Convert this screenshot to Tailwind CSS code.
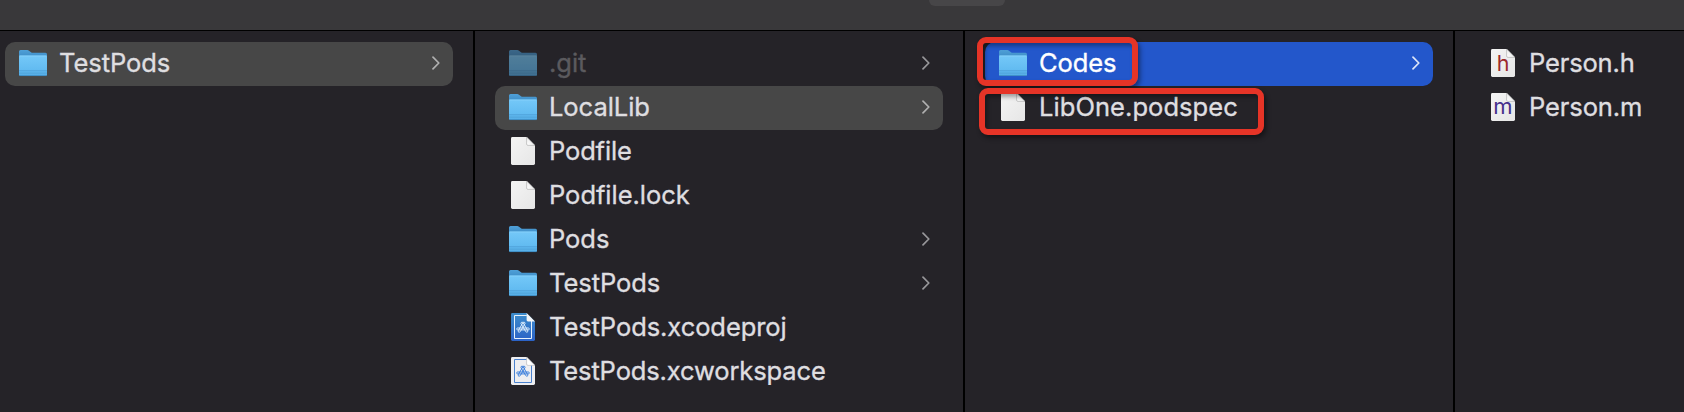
<!DOCTYPE html>
<html lang="en">
<head>
<meta charset="utf-8">
<title>Finder</title>
<script src="https://cdn.jsdelivr.net/npm/@tailwindcss/browser@4"></script>
</head>
<body class="relative flex h-[412px] w-[1684px] flex-col overflow-hidden bg-[#252328] font-['Inter','Liberation_Sans',sans-serif] text-[25.5px] text-[#dfdee0] [-webkit-text-stroke:0.35px_currentColor]">
<svg class="absolute size-0" aria-hidden="true">
  <defs>
    <linearGradient id="front" x1="0" y1="0" x2="0" y2="1"><stop offset="0" stop-color="#74c8f8"/><stop offset=".7" stop-color="#62bbf1"/><stop offset="1" stop-color="#55ade6"/></linearGradient>
    <linearGradient id="back" x1="0" y1="0" x2="0" y2="1"><stop offset="0" stop-color="#4fa0d8"/><stop offset="1" stop-color="#3a88c2"/></linearGradient>
    <linearGradient id="paper" x1="0" y1="0" x2="1" y2="1"><stop offset="0" stop-color="#f4f4f4"/><stop offset="1" stop-color="#e6e6e6"/></linearGradient>
    <linearGradient id="bluepaper" x1="0" y1="0" x2="0" y2="1"><stop offset="0" stop-color="#3d8dcc"/><stop offset="1" stop-color="#2b62c6"/></linearGradient>
    <linearGradient id="fold" x1="0" y1="1" x2="1" y2="0"><stop offset="0" stop-color="#ffffff"/><stop offset=".5" stop-color="#f0f0f0"/></linearGradient>
    <symbol id="folder" viewBox="0 0 28 28">
      <path d="M0 2.5Q0 1 1.5 1H8.2Q9.2 1 10 1.7L12 3.2Q12.7 3.8 13.7 3.8H26.5Q28 3.8 28 5.3V10H0Z" fill="url(#back)"/>
      <path d="M0 7.2Q0 6.6 .8 6.6H27.2Q28 6.6 28 7.2V25.5Q28 27 26.5 27H1.5Q0 27 0 25.5Z" fill="url(#front)"/>
      <path d="M.5 7H27.5" stroke="#8dd4fb" stroke-width=".7"/>
      <path d="M0 21.7H28M0 24.1H28" stroke="#4a9cd2" stroke-width=".7"/>
      <path d="M.5 26.6H27.5" stroke="#3a86bb" stroke-width=".8"/>
    </symbol>
    <symbol id="sheet" viewBox="0 0 24 28">
      <path d="M1.4 0H15.6L24 8.4V26.6Q24 28 22.6 28H1.4Q0 28 0 26.6V1.4Q0 0 1.4 0Z" fill="url(#paper)"/>
      <path d="M15.6 0L24 8.4H17Q15.6 8.4 15.6 7Z" fill="url(#fold)" stroke="#a8a8a8" stroke-width=".6"/>
    </symbol>
    <symbol id="appmark" viewBox="0 0 14 12">
      <g fill="none" stroke="currentColor" stroke-width="1" stroke-linejoin="round">
        <path d="M5.1 1.3Q6 .2 7 1.2L11.7 9.4Q12 10.7 11.1 11Q10.2 11 9.8 10.3L5.1 2.6Q4.7 1.9 5.1 1.3Z"/>
        <path d="M8.9 1.3Q8 .2 7 1.2L2.3 9.4Q2 10.7 2.9 11Q3.8 11 4.2 10.3L8.9 2.6Q9.3 1.9 8.9 1.3Z"/>
        <rect x=".7" y="6.7" width="12.6" height="1.9" rx=".9"/>
      </g>
    </symbol>
    <symbol id="project" viewBox="0 0 24 28">
      <path d="M1.4 0H15.6L24 8.4V26.6Q24 28 22.6 28H1.4Q0 28 0 26.6V1.4Q0 0 1.4 0Z" fill="url(#bluepaper)"/>
      <path d="M15.8 2.5H3.5V25.5H20.5V8" fill="none" stroke="#e6f1fb" stroke-width="1"/>
      <path d="M15.6 0L24 8.4H17Q15.6 8.4 15.6 7Z" fill="#f4f6f8"/>
      <use href="#appmark" x="5" y="8.3" width="14" height="12" color="#d9ebfb"/>
    </symbol>
    <symbol id="workspace" viewBox="0 0 24 28">
      <path d="M1.4 0H15.6L24 8.4V26.6Q24 28 22.6 28H1.4Q0 28 0 26.6V1.4Q0 0 1.4 0Z" fill="#eeeef1"/>
      <path d="M15.8 2.5H3.5V25.5H20.5V8" fill="none" stroke="#4a82cf" stroke-width="1"/>
      <path d="M15.6 0L24 8.4H17Q15.6 8.4 15.6 7Z" fill="#fff" stroke="#b0b0b4" stroke-width=".6"/>
      <use href="#appmark" x="5" y="8.3" width="14" height="12" color="#3f80dc"/>
    </symbol>
    <symbol id="chevron" viewBox="0 0 8 14"><path d="M1 1.2L6.8 7L1 12.8" fill="none" stroke="currentColor" stroke-width="1.7" stroke-linecap="round" stroke-linejoin="round"/></symbol>
  </defs>
</svg>

<header class="flex h-[31px] shrink-0 justify-center border-b border-black bg-[#39383a]">
  <div class="ml-[250px] h-[6px] w-[76px] rounded-b-[8px] bg-[#474648]"></div>
</header>

<main class="flex flex-1 leading-[42px]">
  <section class="w-[475px] shrink-0 border-r-2 border-black pt-[11px] pl-[5px]">
    <div class="flex h-11 w-[448px] items-center rounded-[10px] bg-[#474747] pr-[13px] pb-[2px] pl-[14px]">
      <svg class="size-7"><use href="#folder"/></svg>
      <span class="ml-3 flex-1 tracking-[-0.05px]">TestPods</span>
      <svg class="h-[14px] w-2 text-[#b0b0b0]"><use href="#chevron"/></svg>
    </div>
  </section>

  <section class="w-[490px] shrink-0 border-r-2 border-black pt-[11px] pl-5">
    <div class="flex h-11 w-[448px] items-center pr-[13px] pb-[2px] pl-[14px]">
      <svg class="size-7 opacity-55"><use href="#folder"/></svg>
      <span class="ml-3 flex-1 tracking-[-0.05px] text-[#5b5a5e]">.git</span>
      <svg class="h-[14px] w-2 text-[#98979a]"><use href="#chevron"/></svg>
    </div>
    <div class="flex h-11 w-[448px] items-center rounded-[10px] bg-[#474747] pr-[13px] pb-[2px] pl-[14px]">
      <svg class="size-7"><use href="#folder"/></svg>
      <span class="ml-3 flex-1 tracking-[-0.05px]">LocalLib</span>
      <svg class="h-[14px] w-2 text-[#b0b0b0]"><use href="#chevron"/></svg>
    </div>
    <div class="flex h-11 w-[448px] items-center pb-[2px] pl-4">
      <svg class="h-7 w-6"><use href="#sheet"/></svg>
      <span class="ml-[14px] tracking-[-0.15px]">Podfile</span>
    </div>
    <div class="flex h-11 w-[448px] items-center pb-[2px] pl-4">
      <svg class="h-7 w-6"><use href="#sheet"/></svg>
      <span class="ml-[14px] tracking-[-0.03px]">Podfile.lock</span>
    </div>
    <div class="flex h-11 w-[448px] items-center pr-[13px] pb-[2px] pl-[14px]">
      <svg class="size-7"><use href="#folder"/></svg>
      <span class="ml-3 flex-1 tracking-[-0.05px]">Pods</span>
      <svg class="h-[14px] w-2 text-[#98979a]"><use href="#chevron"/></svg>
    </div>
    <div class="flex h-11 w-[448px] items-center pr-[13px] pb-[2px] pl-[14px]">
      <svg class="size-7"><use href="#folder"/></svg>
      <span class="ml-3 flex-1 tracking-[-0.05px]">TestPods</span>
      <svg class="h-[14px] w-2 text-[#98979a]"><use href="#chevron"/></svg>
    </div>
    <div class="flex h-11 w-[448px] items-center pb-[2px] pl-4">
      <svg class="h-7 w-6"><use href="#project"/></svg>
      <span class="ml-[14px] tracking-[-0.07px]">TestPods.xcodeproj</span>
    </div>
    <div class="flex h-11 w-[448px] items-center pb-[2px] pl-4">
      <svg class="h-7 w-6"><use href="#workspace"/></svg>
      <span class="ml-[14px] tracking-[-0.13px]">TestPods.xcworkspace</span>
    </div>
  </section>

  <section class="w-[490px] shrink-0 border-r-2 border-black pt-[11px] pl-5">
    <div class="flex h-11 w-[448px] items-center rounded-[10px] bg-[#2357cb] pr-[13px] pb-[2px] pl-[14px] text-white">
      <svg class="size-7"><use href="#folder"/></svg>
      <span class="ml-3 flex-1 tracking-[-0.1px]">Codes</span>
      <svg class="h-[14px] w-2 text-[#dde6f8]"><use href="#chevron"/></svg>
    </div>
    <div class="flex h-11 w-[448px] items-center pb-[2px] pl-4">
      <svg class="h-7 w-6"><use href="#sheet"/></svg>
      <span class="ml-[14px] tracking-[0.06px]">LibOne.podspec</span>
    </div>
  </section>

  <section class="flex-1 pt-[11px] pl-5">
    <div class="flex h-11 items-center pb-[2px] pl-4">
      <div class="grid h-7 w-6 place-items-center *:col-start-1 *:row-start-1">
        <svg class="h-7 w-6"><use href="#sheet"/></svg>
        <span class="text-[21.5px] leading-7 text-[#9c2a2c] [-webkit-text-stroke:0]">h</span>
      </div>
      <span class="ml-[14px] tracking-[-0.15px]">Person.h</span>
    </div>
    <div class="flex h-11 items-center pb-[2px] pl-4">
      <div class="grid h-7 w-6 place-items-center *:col-start-1 *:row-start-1">
        <svg class="h-7 w-6"><use href="#sheet"/></svg>
        <span class="pb-[2px] text-[22px] leading-[26px] text-[#45308c] [-webkit-text-stroke:0]">m</span>
      </div>
      <span class="ml-[14px] tracking-[-0.1px]">Person.m</span>
    </div>
  </section>
</main>

<div class="absolute top-[37px] left-[977px] h-[49px] w-[161px] rounded-[9px] border-[6px] border-[#e63427] shadow-[2px_3px_5px_rgba(0,0,0,0.45),inset_2px_3px_4px_rgba(0,0,0,0.35)]"></div>
<div class="absolute top-[88px] left-[979px] h-[47px] w-[285px] rounded-[9px] border-[6px] border-[#e63427] shadow-[2px_3px_5px_rgba(0,0,0,0.45),inset_2px_3px_4px_rgba(0,0,0,0.35)]"></div>
</body>
</html>
